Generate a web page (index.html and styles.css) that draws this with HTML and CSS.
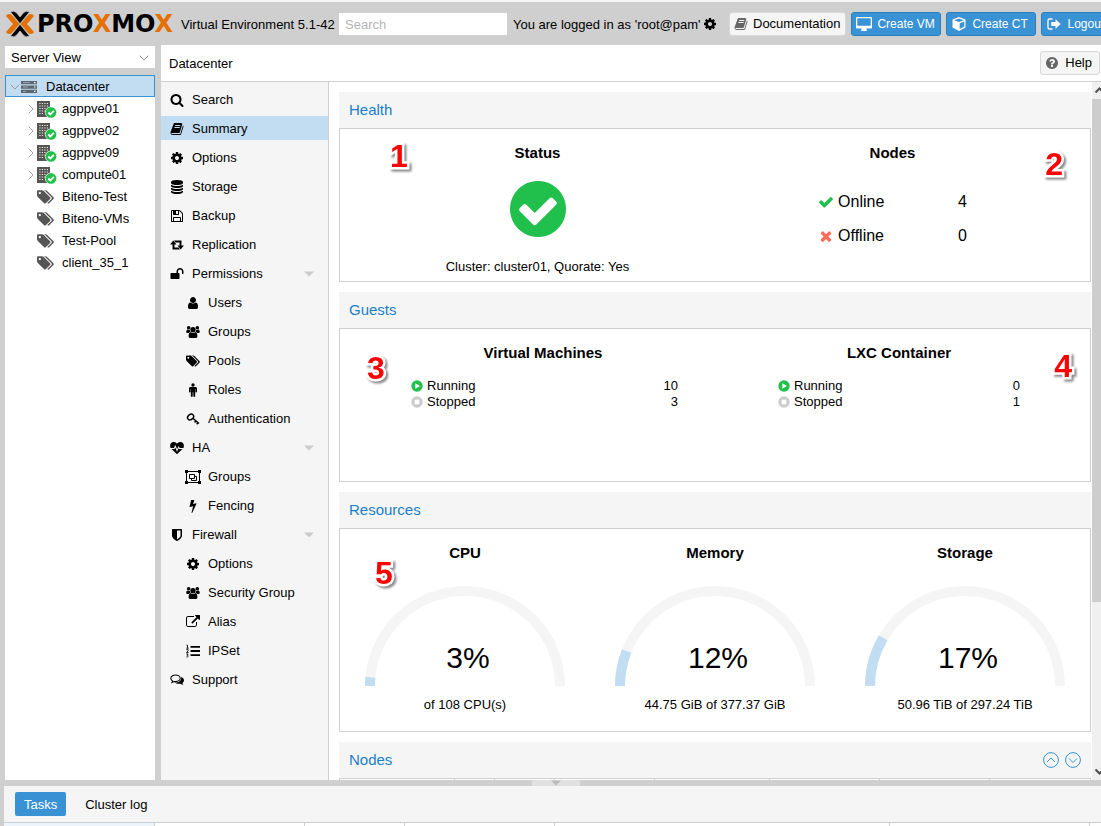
FILE: index.html
```html
<!DOCTYPE html>
<html lang="en">
<head>
<meta charset="utf-8">
<title>Proxmox Virtual Environment</title>
<link rel="stylesheet" href="styles.css">
</head>
<body>
<svg class="sprite" aria-hidden="true">
  <symbol id="search" viewBox="0 0 1792 1792"><path d="M1216 832q0-185-131.500-316.500t-316.500-131.500-316.500 131.500-131.500 316.500 131.500 316.500 316.500 131.500 316.500-131.500 131.500-316.500zm512 832q0 52-38 90t-90 38q-54 0-90-38l-343-342q-179 124-399 124-143 0-273.500-55.500t-225-150-150-225-55.500-273.500 55.500-273.500 150-225 225-150 273.500-55.500 273.500 55.500 225 150 150 225 55.500 273.500q0 220-124 399l343 343q37 37 37 90z"/></symbol>
  <symbol id="book" viewBox="0 0 1792 1792"><path d="M1703 478q40 57 18 129l-275 906q-19 64-76.500 107.500t-122.500 43.500h-923q-77 0-148.500-53.500t-99.500-131.500q-24-67-2-127 0-4 3-27t4-37q1-8-3-21.500t-3-19.500q2-11 8-21t16.500-23.500 16.500-23.500q23-38 45-91.500t30-91.500q3-10 .5-30t-.5-28q3-11 17-28t17-23q21-36 42-92t25-90q1-9-2.500-32t.5-28q4-13 22-30.500t22-22.500q19-26 42.500-84.500t27.500-96.500q1-8-3-25.500t-2-26.500q2-8 9-18t18-23 17-21q8-12 16.500-30.500t15-35 16-36 19.500-32 26.500-23.500 36-11.500 47.500 5.500l-1 3q38-9 51-9h761q74 0 114 56t18 130l-274 906q-36 119-71.500 153.500t-128.500 34.500h-869q-27 0-38 15-11 16-1 43 24 70 144 70h923q29 0 56-15.500t35-41.500l300-987q7-22 5-57 38 15 59 43zm-1064 2q-4 13 2 22.500t20 9.500h608q13 0 25.500-9.500t16.500-22.500l21-64q4-13-2-22.500t-20-9.500h-608q-13 0-25.500 9.500t-16.500 22.500zm-83 256q-4 13 2 22.500t20 9.500h608q13 0 25.500-9.500t16.500-22.500l21-64q4-13-2-22.500t-20-9.500h-608q-13 0-25.500 9.500t-16.500 22.500z"/></symbol>
  <symbol id="cog" viewBox="0 0 1792 1792"><path d="M1152 896q0-106-75-181t-181-75-181 75-75 181 75 181 181 75 181-75 75-181zm512-109v222q0 12-8 23t-20 13l-185 28q-19 54-39 91 35 50 107 138 10 12 10 25t-9 23q-27 37-99 108t-94 71q-12 0-26-9l-138-108q-44 23-91 38-16 136-29 186-7 28-36 28h-222q-14 0-24.500-8.500t-11.500-21.500l-28-184q-49-16-90-37l-141 107q-10 9-25 9-14 0-25-11-126-114-165-168-7-10-7-23 0-12 8-23 15-21 51-66.500t54-70.500q-27-50-41-99l-183-27q-13-2-21-12.500t-8-23.500v-222q0-12 8-23t19-13l186-28q14-46 39-92-40-57-107-138-10-12-10-24 0-10 9-23 26-36 98.500-107.500t94.500-71.500q13 0 26 10l138 107q44-23 91-38 16-136 29-186 7-28 36-28h222q14 0 24.500 8.500t11.500 21.500l28 184q49 16 90 37l142-107q9-9 24-9 13 0 25 10 129 119 165 170 7 8 7 22 0 12-8 23-15 21-51 66.500t-54 70.500q26 50 41 98l183 28q13 2 21 12.500t8 23.500z"/></symbol>
  <symbol id="database" viewBox="0 0 1792 1792"><path d="M896 768q237 0 443-43t325-127v170q0 69-103 128t-280 93.500-385 34.500-385-34.500-280-93.500-103-128v-170q119 84 325 127t443 43zm0 768q237 0 443-43t325-127v170q0 69-103 128t-280 93.500-385 34.500-385-34.500-280-93.500-103-128v-170q119 84 325 127t443 43zm0-384q237 0 443-43t325-127v170q0 69-103 128t-280 93.500-385 34.500-385-34.500-280-93.500-103-128v-170q119 84 325 127t443 43zm0-1152q208 0 385 34.500t280 93.500 103 128v128q0 69-103 128t-280 93.500-385 34.500-385-34.500-280-93.500-103-128v-128q0-69 103-128t280-93.500 385-34.500z"/></symbol>
  <symbol id="floppy" viewBox="0 0 1792 1792"><path d="M512 1536h768v-384h-768v384zm896 0h128v-896q0-14-10-38.500t-20-34.500l-281-281q-10-10-34-20t-39-10v416q0 40-28 68t-68 28h-576q-40 0-68-28t-28-68v-416h-128v1280h128v-416q0-40 28-68t68-28h832q40 0 68 28t28 68v416zm-384-928v-320q0-13-9.500-22.500t-22.500-9.500h-192q-13 0-22.500 9.500t-9.500 22.500v320q0 13 9.500 22.500t22.500 9.500h192q13 0 22.500-9.500t9.500-22.500zm640 32v928q0 40-28 68t-68 28h-1344q-40 0-68-28t-28-68v-1344q0-40 28-68t68-28h928q40 0 88 20t76 48l280 280q28 28 48 76t20 88z"/></symbol>
  <symbol id="retweet" viewBox="0 0 14 14"><path d="M3.300 2.500 6.500 6.500H4.500V9.400H8.500L10 11.500H2.500V6.500H.1ZM10.700 11.500 7.500 7.500H9.500V4.600H5.500L4 2.500h7.500v5h2.400Z"/></symbol>
  <symbol id="unlock" viewBox="0 0 1792 1792"><path d="M1728 576v256q0 26-19 45t-45 19h-64q-26 0-45-19t-19-45v-256q0-106-75-181t-181-75-181 75-75 181v192h96q40 0 68 28t28 68v576q0 40-28 68t-68 28h-960q-40 0-68-28t-28-68v-576q0-40 28-68t68-28h672v-192q0-185 131.500-316.500t316.500-131.500 316.500 131.500 131.500 316.500z"/></symbol>
  <symbol id="user" viewBox="0 0 1792 1792"><path d="M1536 1399q0 109-62.500 187t-150.500 78h-854q-88 0-150.500-78t-62.500-187q0-85 8.500-160.500t31.500-152 58.500-131 94-89 134.500-34.500q131 128 313 128t313-128q76 0 134.500 34.500t94 89 58.500 131 31.500 152 8.500 160.500zm-256-887q0 159-112.500 271.500t-271.500 112.500-271.500-112.500-112.500-271.500 112.500-271.500 271.500-112.500 271.500 112.500 112.500 271.500z"/></symbol>
  <symbol id="users" viewBox="0 0 15 14"><circle cx="2.900" cy="2.500" r="1.900"/><circle cx="12.100" cy="2.500" r="1.900"/><circle cx="7.500" cy="4.500" r="2.800"/><path d="M.3 7.500c0-2 .5-3.200 1.300-3.200.8.500 1.700.6 2.500.3 0 1 .3 1.800.9 2.400-.9 0-1.700.4-2.200 1H1.500C.8 8 .3 7.800.3 7.500ZM14.700 7.500c0-2-.5-3.200-1.300-3.200-.8.500-1.700.6-2.500.3 0 1-.3 1.800-.9 2.400.9 0 1.700.4 2.200 1h1.300c.7 0 1.200-.2 1.200-.5ZM2.800 11.500c0-2.500.8-4.200 2.300-4.200 1.500 1 3.300 1 4.800 0 1.500 0 2.300 1.700 2.300 4.200 0 1.200-.8 1.900-1.900 1.900H4.700c-1.100 0-1.900-.7-1.900-1.900Z"/></symbol>
  <symbol id="tags" viewBox="0 0 1920 1792"><path d="M448 448q0-53-37.500-90.500t-90.500-37.500-90.500 37.500-37.500 90.500 37.500 90.500 90.500 37.500 90.500-37.500 37.500-90.500zm1067 576q0 53-37 90l-491 492q-39 37-91 37-53 0-90-37l-715-716q-38-37-64.500-101t-26.500-117v-416q0-52 38-90t90-38h416q53 0 117 26.500t102 64.500l715 714q37 39 37 91zm384 0q0 53-37 90l-491 492q-39 37-91 37-36 0-59-14t-53-45l470-470q37-37 37-90 0-52-37-91l-715-714q-38-38-102-64.500t-117-26.500h224q53 0 117 26.500t102 64.500l715 714q37 39 37 91z"/></symbol>
  <symbol id="male" viewBox="0 0 14 14"><circle cx="7" cy="2" r="1.700"/><path d="M4.500 4h5c1 0 1.500.6 1.500 1.500v3.200c0 1-1.500 1-1.500 0V6H9.200v7c0 1.200-1.900 1.200-1.900 0V9.300h-.6V13c0 1.200-1.900 1.200-1.900 0V6h-.3v2.700c0 1-1.500 1-1.500 0V5.500C3 4.600 3.500 4 4.500 4Z"/></symbol>
  <symbol id="key" viewBox="0 0 14 14"><g fill="none" stroke="currentColor" stroke-width="1.500"><ellipse cx="4.600" cy="5" rx="3.300" ry="2.500" transform="rotate(-40 4.600 5)"/><path d="M6.800 6.300 13 11.500M9.800 9 8.600 10.400M12 10.600 10.700 12.200"/></g></symbol>
  <symbol id="heartbeat" viewBox="0 0 14 14"><path d="M7 13.300 1.500 8h3L5.300 6.400 7 10.800 8.600 7.200 9 8h3.500ZM.6 7C-.5 4.500.3 1 3.600 1 5.400 1 6.500 2 7 2.700 7.500 2 8.600 1 10.400 1c3.300 0 4.100 3.500 3 6H9.700L8.600 5 7.100 8.300 5.400 3.900 3.800 7Z"/></symbol>
  <symbol id="object-group" viewBox="0 0 16 14"><path fill="none" stroke="currentColor" d="M1.500 1.500h13v11h-13ZM4.500 4.500h5v4h-5ZM9.500 6.500h2v4h-5v-2"/><path d="M0 0h3v3H0ZM13 0h3v3h-3ZM0 11h3v3H0ZM13 11h3v3h-3Z"/></symbol>
  <symbol id="bolt" viewBox="0 0 1792 1792"><path d="M1333 566q18 20 7 44l-540 1157q-13 25-42 25-4 0-14-2-17-5-25.500-19t-4.500-30l197-808-406 101q-4 1-12 1-18 0-31-11-18-15-13-39l201-825q4-14 16-23t28-9h328q19 0 32 12.500t13 29.500q0 8-5 18l-171 463 396-98q8-2 12-2 19 0 34 15z"/></symbol>
  <symbol id="shield" viewBox="0 0 1792 1792"><path d="M1344 960v-640h-448v1137q119-63 213-137 235-184 235-360zm192-768v768q0 86-33.500 170.500t-83 150-118 127.500-126.500 103-121 77.500-89.500 49.500-42.500 20q-12 6-26 6t-26-6q-16-7-42.500-20t-89.500-49.500-121-77.500-126.500-103-118-127.500-83-150-33.500-170.500v-768q0-26 19-45t45-19h1152q26 0 45 19t19 45z"/></symbol>
  <symbol id="external" viewBox="0 0 1792 1792"><path d="M1408 928v320q0 119-84.500 203.500t-203.500 84.500h-832q-119 0-203.500-84.500t-84.500-203.500v-832q0-119 84.500-203.500t203.500-84.500h704q14 0 23 9t9 23v64q0 14-9 23t-23 9h-704q-66 0-113 47t-47 113v832q0 66 47 113t113 47h832q66 0 113-47t47-113v-320q0-14 9-23t23-9h64q14 0 23 9t9 23zm384-864v512q0 26-19 45t-45 19-45-19l-176-176-652 652q-10 10-23 10t-23-10l-114-114q-10-10-10-23t10-23l652-652-176-176q-19-19-19-45t19-45 45-19h512q26 0 45 19t19 45z"/></symbol>
  <symbol id="list-ol" viewBox="0 0 14 14"><path d="M4.500 2H14v1.800H4.500ZM4.500 6.100H14v1.800H4.500ZM4.500 10.200H14V12H4.500Z"/><path fill="none" stroke="currentColor" stroke-width=".9" d="M.5 1.200h1v3M.4 4.200h2.200M.4 5.600h1.700v1L.6 8.500h2M.4 10h1.700L1.200 11.300c1.500 0 1.300 2-.8 1.700"/></symbol>
  <symbol id="comments" viewBox="0 0 14 14"><path fill="none" stroke="currentColor" stroke-width="1.100" d="M5.500 2C2.900 2 .8 3.500.8 5.300c0 1.100.7 2 1.800 2.600L2 9.500l2.200-1c.4.100.8.100 1.300.1 2.600 0 4.700-1.500 4.700-3.300S8.100 2 5.500 2Z"/><path d="M11.200 3.900c1.600.6 2.800 1.900 2.800 3.300 0 1.100-.6 2-1.600 2.700.1.900.6 1.300 1.200 1.800-1.300.1-2.400-.3-3.300-1-2 .4-4.300 0-5.600-1.100 3.700.2 6.900-1.700 6.500-5.700Z"/></symbol>
  <symbol id="check-circle" viewBox="128 128 1536 1536"><path d="M1412 734q0-28-18-46l-91-90q-19-19-45-19t-45 19l-408 407-226-226q-19-19-45-19t-45 19l-91 90q-18 18-18 46 0 27 18 45l362 362q19 19 45 19 27 0 46-19l543-543q18-18 18-45zm252 162q0 209-103 385.500t-279.500 279.500-385.500 103-385.500-103-279.500-279.500-103-385.500 103-385.500 279.500-279.500 385.500-103 385.500 103 279.500 279.500 103 385.500z"/></symbol>
  <symbol id="check" viewBox="0 0 1792 1792"><path d="M1671 566q0 40-28 68l-724 724-136 136q-28 28-68 28t-68-28l-136-136-362-362q-28-28-28-68t28-68l136-136q28-28 68-28t68 28l294 295 656-657q28-28 68-28t68 28l136 136q28 28 28 68z"/></symbol>
  <symbol id="times" viewBox="0 0 1792 1792"><path d="M1490 1322q0 40-28 68l-136 136q-28 28-68 28t-68-28l-294-294-294 294q-28 28-68 28t-68-28l-136-136q-28-28-28-68t28-68l294-294-294-294q-28-28-28-68t28-68l136-136q28-28 68-28t68 28l294 294 294-294q28-28 68-28t68 28l136 136q28 28 28 68t-28 68l-294 294 294 294q28 28 28 68z"/></symbol>
  <symbol id="question" viewBox="0 0 1792 1792"><path d="M1024 1376v-192q0-14-9-23t-23-9h-192q-14 0-23 9t-9 23v192q0 14 9 23t23 9h192q14 0 23-9t9-23zm256-672q0-88-55.500-163t-138.500-116-170-41q-243 0-371 213-15 24 8 42l132 100q7 6 19 6 16 0 25-12 53-68 86-92 34-24 86-24 48 0 85.500 26t37.500 59q0 38-20 61t-68 45q-63 28-115.500 86.500t-52.500 125.500v36q0 14 9 23t23 9h192q14 0 23-9t9-23q0-19 21.500-49.500t54.500-49.500q32-18 49-28.500t46-35 44.500-48 28-60.500 12.500-81zm384 192q0 209-103 385.500t-279.500 279.500-385.500 103-385.500-103-279.500-279.500-103-385.500 103-385.500 279.500-279.500 385.500-103 385.500 103 279.500 279.500 103 385.500z"/></symbol>
  <symbol id="desktop" viewBox="0 0 16 14"><path fill-rule="evenodd" d="M1 0h14a1 1 0 0 1 1 1v9.500a1 1 0 0 1-1 1h-4.700c0 .8.700 1.200.7 1.800 0 .4-.2.700-.6.700H5.600c-.4 0-.6-.3-.6-.7 0-.6.700-1 .7-1.800H1a1 1 0 0 1-1-1V1a1 1 0 0 1 1-1Zm.3 1.200v7.500h13.400V1.200Z"/></symbol>
  <symbol id="cube" viewBox="0 0 14 14"><path fill-rule="evenodd" d="M7 0 13.500 2.400V10.500L7 14 .5 10.500V2.400ZM7 1.400 2.200 3.200 7 5 11.800 3.200ZM7.700 12 12.300 9.600V4.500L7.700 6.200Z"/></symbol>
  <symbol id="signout" viewBox="0 0 14 14"><path fill="none" stroke="currentColor" stroke-width="1.300" d="M5.500 2H2.600Q1 2 1 3.600v6.800Q1 12 2.600 12h2.900"/><path d="M8.500 2.200 13.600 7 8.500 11.800V9H4.200V5h4.300Z"/></symbol>
  <symbol id="server" viewBox="0 0 16 14"><path d="M0 1h16v3.300H0ZM0 5.400h16v3.300H0ZM0 9.800h16v3.300H0Z"/><path stroke="#fff" d="M2 2.600h7M2 7h5M2 11.400h3" opacity=".4"/><path stroke="#fff" stroke-width="1.200" d="M13 2.600h1.500M13 7h1.500M13 11.400h1.500"/></symbol>
  <symbol id="node" viewBox="0 0 20 18"><path fill="#555" d="M0 1h13v16H0Z"/><path stroke="#f3ead8" stroke-width="1.200" stroke-dasharray="1.200 1.300" d="M2.300 3.500h9M2.300 6h9M2.300 8.500h9M2.300 11h9M2.300 13.500h4"/><circle cx="14" cy="12.500" r="5.700" fill="#21bf4b" stroke="#fff" stroke-width=".7"/><path fill="none" stroke="#fff" stroke-width="1.800" d="m11.300 12.500 2 2 3.600-3.700"/></symbol>
  <symbol id="right" viewBox="0 0 6 10"><path fill="none" stroke="#aaa" d="m.7.700 4.300 4.300L.7 9.300"/></symbol>
  <symbol id="down" viewBox="0 0 10 6"><path fill="none" stroke="#999" d="m.7.700 4.300 4.300L9.300.7"/></symbol>
  <symbol id="caret" viewBox="0 0 10 6"><path d="M0 .5h10L5 5.500Z"/></symbol>
  <symbol id="play" viewBox="0 0 12 12"><circle cx="6" cy="6" r="5.700" fill="#21bf4b"/><path fill="#fff" d="M4.300 3.200 9 6 4.300 8.800Z"/></symbol>
  <symbol id="stop" viewBox="0 0 12 12"><circle cx="6" cy="6" r="5.700" fill="#ccc"/><path fill="#fff" d="M3.700 3.700h4.600v4.600H3.700Z"/></symbol>
  <symbol id="circle-up" viewBox="0 0 16 16"><circle cx="8" cy="8" r="7.400" fill="none" stroke="currentColor"/><path fill="none" stroke="currentColor" d="m4 10 4-4 4 4"/></symbol>
  <symbol id="circle-down" viewBox="0 0 16 16"><circle cx="8" cy="8" r="7.400" fill="none" stroke="currentColor"/><path fill="none" stroke="currentColor" d="m4 6.500 4 4 4-4"/></symbol>
</svg>
<div class="app">
  <header class="topbar">
    <div class="logo">
      <svg class="logo-mark" viewBox="0 0 28 26" aria-hidden="true"><path fill="#e57000" d="M0 5Q1 3 3 3 5 3 6 4.200L13.500 13 6 21.800Q5 23 3 23 1 23 0 21L7 13ZM28 5Q27 3 25 3 23 3 22 4.200L14.500 13 22 21.800Q23 23 25 23 27 23 28 21L21 13Z"/><path stroke="#cfcfcf" stroke-width=".7" d="M4.500 1Q8 -1 10.500 1.800L14 6 17.500 1.800Q20-1 23.500 1L14 12.700ZM4.500 25Q8 27 10.500 24.200L14 20 17.500 24.200Q20 27 23.500 25L14 13.300Z"/></svg>
      <span class="wordmark">PRO<i>X</i>MO<i>X</i></span>
    </div>
    <span class="version">Virtual Environment 5.1-42</span>
    <input class="search" type="text" placeholder="Search" aria-label="Search">
    <span class="login">You are logged in as 'root@pam'</span>
    <svg class="icon gear"><use href="#cog"/></svg>
    <div class="actions">
      <button class="btn"><svg class="icon"><use href="#book"/></svg>Documentation</button>
      <button class="btn primary"><svg class="icon wide"><use href="#desktop"/></svg>Create VM</button>
      <button class="btn primary"><svg class="icon"><use href="#cube"/></svg>Create CT</button>
      <button class="btn primary"><svg class="icon"><use href="#signout"/></svg>Logout</button>
    </div>
  </header>
  <div class="workspace">
    <aside class="left">
      <button class="view">Server View<svg class="chev"><use href="#down"/></svg></button>
      <ul class="tree">
        <li class="root"><svg class="chev"><use href="#down"/></svg><svg class="icon wide"><use href="#server"/></svg><span>Datacenter</span></li>
        <li><svg class="exp"><use href="#right"/></svg><svg class="nodeicon"><use href="#node"/></svg>agppve01</li>
        <li><svg class="exp"><use href="#right"/></svg><svg class="nodeicon"><use href="#node"/></svg>agppve02</li>
        <li><svg class="exp"><use href="#right"/></svg><svg class="nodeicon"><use href="#node"/></svg>agppve09</li>
        <li><svg class="exp"><use href="#right"/></svg><svg class="nodeicon"><use href="#node"/></svg>compute01</li>
        <li class="pool"><svg class="tagicon"><use href="#tags"/></svg>Biteno-Test</li>
        <li class="pool"><svg class="tagicon"><use href="#tags"/></svg>Biteno-VMs</li>
        <li class="pool"><svg class="tagicon"><use href="#tags"/></svg>Test-Pool</li>
        <li class="pool"><svg class="tagicon"><use href="#tags"/></svg>client_35_1</li>
      </ul>
    </aside>
    <main class="main">
      <div class="titlebar"><span>Datacenter</span><button class="btn"><svg class="icon"><use href="#question"/></svg>Help</button></div>
      <div class="columns">
        <nav class="nav">
          <a href="#"><svg class="icon"><use href="#search"/></svg>Search</a>
          <a href="#" class="active"><svg class="icon"><use href="#book"/></svg>Summary</a>
          <a href="#"><svg class="icon"><use href="#cog"/></svg>Options</a>
          <a href="#"><svg class="icon"><use href="#database"/></svg>Storage</a>
          <a href="#"><svg class="icon"><use href="#floppy"/></svg>Backup</a>
          <a href="#"><svg class="icon"><use href="#retweet"/></svg>Replication</a>
          <a href="#"><svg class="icon"><use href="#unlock"/></svg>Permissions<svg class="caret"><use href="#caret"/></svg></a>
          <a href="#" class="sub"><svg class="icon"><use href="#user"/></svg>Users</a>
          <a href="#" class="sub"><svg class="icon"><use href="#users"/></svg>Groups</a>
          <a href="#" class="sub"><svg class="icon"><use href="#tags"/></svg>Pools</a>
          <a href="#" class="sub"><svg class="icon"><use href="#male"/></svg>Roles</a>
          <a href="#" class="sub"><svg class="icon"><use href="#key"/></svg>Authentication</a>
          <a href="#"><svg class="icon"><use href="#heartbeat"/></svg>HA<svg class="caret"><use href="#caret"/></svg></a>
          <a href="#" class="sub group"><svg class="icon wide"><use href="#object-group"/></svg>Groups</a>
          <a href="#" class="sub"><svg class="icon"><use href="#bolt"/></svg>Fencing</a>
          <a href="#"><svg class="icon"><use href="#shield"/></svg>Firewall<svg class="caret"><use href="#caret"/></svg></a>
          <a href="#" class="sub"><svg class="icon"><use href="#cog"/></svg>Options</a>
          <a href="#" class="sub"><svg class="icon"><use href="#users"/></svg>Security Group</a>
          <a href="#" class="sub"><svg class="icon"><use href="#external"/></svg>Alias</a>
          <a href="#" class="sub"><svg class="icon"><use href="#list-ol"/></svg>IPSet</a>
          <a href="#"><svg class="icon"><use href="#comments"/></svg>Support</a>
        </nav>
        <div class="content">
          <section class="panel">
            <h2>Health</h2>
            <div class="body health">
              <div class="cell"><h3>Status</h3><svg class="status"><use href="#check-circle"/></svg><p>Cluster: cluster01, Quorate: Yes</p></div>
              <div class="cell"><h3>Nodes</h3>
                <ul class="nodes">
                  <li><svg class="mark-icon good"><use href="#check"/></svg><span>Online</span><b>4</b></li>
                  <li><svg class="mark-icon bad"><use href="#times"/></svg><span>Offline</span><b>0</b></li>
                </ul>
              </div>
              <span class="mark m1">1</span><span class="mark m2">2</span>
            </div>
          </section>
          <section class="panel">
            <h2>Guests</h2>
            <div class="body guests">
              <div class="cell"><h3>Virtual Machines</h3>
                <ul class="counts vm">
                  <li><svg class="dot"><use href="#play"/></svg>Running<b>10</b></li>
                  <li><svg class="dot"><use href="#stop"/></svg>Stopped<b>3</b></li>
                </ul>
              </div>
              <div class="cell"><h3>LXC Container</h3>
                <ul class="counts lxc">
                  <li><svg class="dot"><use href="#play"/></svg>Running<b>0</b></li>
                  <li><svg class="dot"><use href="#stop"/></svg>Stopped<b>1</b></li>
                </ul>
              </div>
              <span class="mark m3">3</span><span class="mark m4">4</span>
            </div>
          </section>
          <section class="panel">
            <h2>Resources</h2>
            <div class="body resources">
              <div class="cell"><h3>CPU</h3>
                <svg class="gauge" viewBox="0 0 200 100"><path class="track" d="M5 100a95 95 0 0 1 190 0"/><path class="value" pathLength="100" stroke-dasharray="3 100" d="M5 100a95 95 0 0 1 190 0"/><text x="103" y="82">3%</text></svg>
                <p>of 108 CPU(s)</p></div>
              <div class="cell"><h3>Memory</h3>
                <svg class="gauge" viewBox="0 0 200 100"><path class="track" d="M5 100a95 95 0 0 1 190 0"/><path class="value" pathLength="100" stroke-dasharray="12 100" d="M5 100a95 95 0 0 1 190 0"/><text x="103" y="82">12%</text></svg>
                <p>44.75 GiB of 377.37 GiB</p></div>
              <div class="cell"><h3>Storage</h3>
                <svg class="gauge" viewBox="0 0 200 100"><path class="track" d="M5 100a95 95 0 0 1 190 0"/><path class="value" pathLength="100" stroke-dasharray="17 100" d="M5 100a95 95 0 0 1 190 0"/><text x="103" y="82">17%</text></svg>
                <p>50.96 TiB of 297.24 TiB</p></div>
              <span class="mark m5">5</span>
            </div>
          </section>
          <section class="panel">
            <h2>Nodes<span class="tools"><button aria-label="Move up"><svg><use href="#circle-up"/></svg></button><button aria-label="Move down"><svg><use href="#circle-down"/></svg></button></span></h2>
            <div class="nodegrid"><span></span><span></span><span></span><span></span><span></span><span></span><span></span><span></span></div>
          </section>
        </div>
        <div class="scroll"><svg viewBox="0 0 17 17"><path d="m3.500 10.500 4-4 4 4"/></svg><div class="thumb"></div><svg viewBox="0 0 17 17"><path d="m3.500 6.500 4 4 4-4"/></svg></div>
      </div>
    </main>
  </div>
  <div class="splitter"><span><svg><use href="#caret"/></svg></span></div>
  <footer class="bottom">
    <div class="tabs"><button class="tab on">Tasks</button><button class="tab">Cluster log</button></div>
    <div class="loggrid"><span></span><span></span><span></span><span></span><span></span><span></span><span></span></div>
  </footer>
</div>
</body>
</html>
```

FILE: styles.css
```css
* { box-sizing: border-box; }
body { margin: 0; background: #cfcfcf; color: #000; font: 13px/18px "Liberation Sans", Arial, sans-serif; overflow: hidden; }
button, input { font: inherit; color: inherit; }
ul, h2, h3, p { margin: 0; padding: 0; list-style: none; }
svg { display: block; flex: none; fill: currentColor; }
.sprite { position: absolute; width: 0; height: 0; }
.icon { width: 14px; height: 14px; }
.icon.wide { width: 16px; }
.app { display: flex; flex-direction: column; height: 100vh; overflow: hidden; }

.topbar { display: flex; align-items: center; height: 45px; flex: none; padding-left: 6px; border-top: 2px solid #f5f5f5; white-space: nowrap; overflow: hidden; }
.topbar > * { flex: none; }
.logo { display: flex; align-items: center; gap: 3px; width: 175px; }
.logo-mark { width: 28px; height: 26px; }
.wordmark { font: bold 24px/26px "DejaVu Sans", sans-serif; }
.wordmark i { color: #e57000; font-style: normal; }
.version { width: 158px; padding-top: 2px; }
.search { width: 168px; height: 22px; border: 0; padding: 2px 6px 0; background: #fff; }
.search::placeholder { color: #b5b5b5; opacity: 1; }
.login { margin-left: 6px; padding-top: 2px; width: 190px; }
.gear { margin-right: 12px; }
.actions { display: flex; gap: 5px; }
.btn { display: flex; align-items: center; gap: 5px; height: 24px; padding: 0 5px 0 4px; border: 1px solid #d8d8d8; border-radius: 3px; background: #f5f5f5; white-space: nowrap; }
.btn .icon { color: #666; }
.btn.primary { min-width: 90px; background: #3892d4; border-color: #2880c3; color: #fff; font-size: 12px; }
.btn.primary .icon { width: 16px; color: #fff; }

.workspace { display: flex; flex: 1; min-height: 0; padding-left: 5px; gap: 6px; }
.left { display: flex; flex-direction: column; gap: 7px; width: 150px; flex: none; padding-top: 1px; }
.view { display: flex; align-items: center; justify-content: space-between; height: 22px; padding: 2px 6px 0; border: 0; background: #fff; }
.chev { width: 10px; height: 6px; }
.tree { flex: 1; background: #fff; }
.tree li { display: flex; align-items: center; height: 22px; padding: 2px 0 0 23px; white-space: nowrap; }
.tree .root { padding-left: 4px; border: 1px solid #3892d4; background: #c2ddf2; }
.root .icon { margin: 0 9px 0 1px; color: #5a6670; }
.exp { width: 6px; height: 10px; }
.nodeicon { width: 20px; height: 18px; margin: 0 5px 0 3px; }
.tree .pool { padding-left: 32px; }
.tagicon { width: 17px; height: 16px; margin-right: 8px; color: #555; }

.main { display: flex; flex-direction: column; flex: 1; min-width: 0; background: #fff; }
.titlebar { display: flex; align-items: center; justify-content: space-between; height: 37px; flex: none; padding: 0 1px 0 8px; border-bottom: 1px solid #cfcfcf; }
.titlebar span { padding-top: 2px; }
.titlebar .btn { gap: 6px; padding-right: 7px; }
.columns { display: flex; flex: 1; min-height: 0; }
.nav { display: flex; flex-direction: column; gap: 5px; width: 168px; flex: none; padding-top: 5px; background: #f5f5f5; border-right: 1px solid #cfcfcf; overflow: hidden; }
.nav a { display: flex; align-items: center; gap: 8px; height: 24px; flex: none; padding: 2px 14px 0 9px; color: #000; text-decoration: none; }
.nav a.sub { padding-left: 25px; }
.nav a.group { gap: 7px; padding-left: 24px; }
.nav a.active { background: #c2ddf2; }
.caret { width: 10px; height: 6px; margin-left: auto; color: #ccc; }

.content { display: flex; flex-direction: column; gap: 10px; flex: 1; min-width: 0; padding: 10px 1px 0 10px; overflow: hidden; }
.panel { flex: none; }
.panel h2 { display: flex; align-items: center; justify-content: space-between; height: 36px; padding: 0 10px; background: #f5f5f5; color: #1a7fca; font-size: 15px; font-weight: normal; }
.body { position: relative; display: flex; height: 154px; border: 1px solid #cfcfcf; }
.cell { flex: 1; min-width: 0; display: flex; flex-direction: column; align-items: center; padding-top: 15px; }
.cell h3 { font-size: 15px; line-height: 18px; }
.health { padding: 0 20px; }
.status { width: 56px; height: 56px; margin: 19px 0 21px; color: #21bf4b; }
.nodes { margin-top: 23px; font-size: 16px; }
.nodes li { display: flex; align-items: center; height: 34px; }
.nodes span { width: 124px; padding-left: 4px; }
.nodes b, .counts b { font-weight: normal; }
.mark-icon { width: 16px; height: 16px; }
.good { color: #21bf4b; }
.bad { color: #ff6c59; }
.guests { padding: 0 13px 0 25px; }
.counts { align-self: stretch; margin-top: 16px; }
.counts.vm { padding: 0 43px 0 46px; }
.counts.lxc { padding: 0 57px; }
.counts li { display: flex; align-items: center; gap: 4px; line-height: 16px; }
.counts b { margin-left: auto; }
.dot { width: 12px; height: 12px; }
.resources { height: 204px; }
.gauge { width: 200px; height: 100px; margin: 24px 0 10px; }
.gauge path { fill: none; stroke-width: 10; }
.gauge .track { stroke: #f5f5f5; }
.gauge .value { stroke: #c2ddf2; }
.gauge text { font-size: 30px; text-anchor: middle; }
.mark { position: absolute; color: #f00; font-size: 32px; line-height: 36px; font-weight: bold; -webkit-text-stroke: 5px #fff; paint-order: stroke fill; filter: drop-shadow(2px 2px 1px #888); }
.m1 { left: 50px; top: 9px; }
.m2 { right: 27px; top: 17px; }
.m3 { left: 27px; top: 21px; }
.m4 { right: 18px; top: 19px; }
.m5 { left: 35px; top: 26px; }
.tools { display: flex; gap: 6px; }
.tools button { padding: 0; border: 0; background: none; color: #3892d4; }
.tools svg { width: 16px; height: 16px; }
.nodegrid { display: grid; grid-template-columns: 115px 40px 60px 100px 115px 110px 110px 1fr; height: 24px; border: 1px solid #cfcfcf; }
.nodegrid span { border-right: 1px solid #cfcfcf; }
.nodegrid span:last-child { border: 0; }

.scroll { display: flex; flex-direction: column; justify-content: space-between; width: 9px; flex: none; background: #f0f0f0; overflow: hidden; }
.scroll svg { width: 17px; height: 17px; fill: none; stroke: #505050; stroke-width: 2; }
.thumb { flex: 0 0 72%; margin-bottom: auto; background: #cdcdcd; }
.splitter { display: flex; justify-content: center; height: 6px; flex: none; padding-left: 11px; }
.splitter span { display: flex; justify-content: center; width: 48px; background: #e0e0e0; color: #bbb; }
.splitter svg { width: 10px; height: 6px; }
.bottom { flex: none; margin-left: 4px; background: #f5f5f5; }
.tabs { display: flex; align-items: center; gap: 10px; height: 36px; padding-left: 11px; }
.tab { height: 24px; padding: 2px 9px 0; border: 0; border-radius: 2px; background: none; }
.tab.on { background: #3892d4; color: #fff; }
.loggrid { display: grid; grid-template-columns: 151px 150px 100px 150px 1fr 200px 11px; height: 4px; border-top: 1px solid #cfcfcf; background: #fff; }
.loggrid span { border-right: 1px solid #cfcfcf; }
.loggrid span:first-child { background: #edf4fa; }
.loggrid span:last-child { border: 0; }
```
